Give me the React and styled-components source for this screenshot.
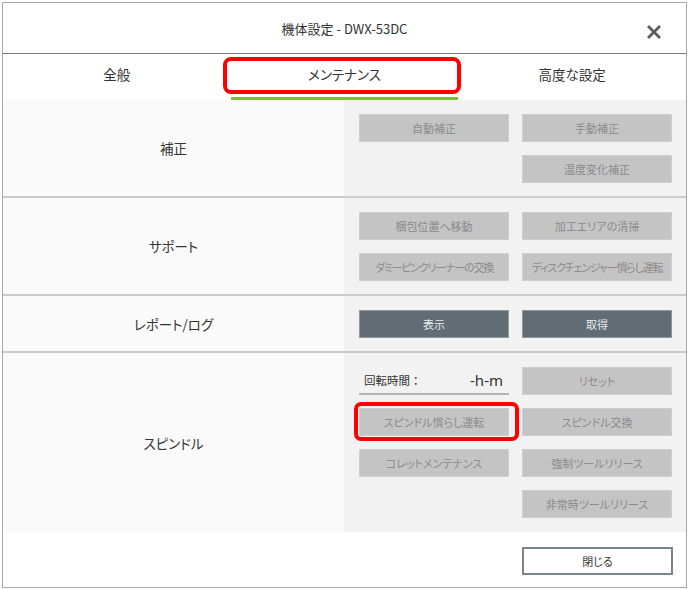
import React from "react";
import styled, { createGlobalStyle } from "styled-components";

const Global = createGlobalStyle`
  html, body { margin: 0; padding: 0; background: #ffffff; }
  body {
    font-family: "Noto Sans CJK JP", "Noto Sans", sans-serif;
    font-feature-settings: "palt" 1;
  }
  * { box-sizing: border-box; }
`;

const Dialog = styled.div`
  margin: 2px 0 0 2px;
  width: 685px;
  height: 586px;
  border: 1px solid #a9a9a9;
  background: #ffffff;
  display: flex;
  flex-direction: column;
`;

const Header = styled.div`
  height: 51px;
  border-bottom: 1px solid #7a7a7a;
  display: flex;
  align-items: center;
  justify-content: center;
  position: relative;
`;

const Title = styled.div`
  font-size: 13px;
  color: #333;
`;

const CloseBtn = styled.div`
  position: absolute;
  right: 24px;
  top: 18px;
  width: 16px;
  height: 16px;
`;

const Tabs = styled.div`
  height: 46px;
  display: grid;
  grid-template-columns: 1fr 1fr 1fr;
`;

const Tab = styled.div`
  position: relative;
  display: flex;
  align-items: center;
  justify-content: center;
  font-size: 13.5px;
  color: #333;
  padding-bottom: 3px;
  border-bottom: 3px solid ${(p) => (p.$active ? "#7dbf3b" : "transparent")};
`;

const Highlight = styled.div`
  position: absolute;
  top: ${(p) => p.$t}px;
  bottom: ${(p) => p.$b}px;
  left: ${(p) => p.$l}px;
  right: ${(p) => p.$r}px;
  border: 4px solid #ff0000;
  border-radius: ${(p) => p.$rad}px;
  pointer-events: none;
`;

const Content = styled.div`
  display: flex;
  flex-direction: column;
`;

const Section = styled.div`
  display: grid;
  grid-template-columns: 341px 1fr;
  border-bottom: ${(p) => (p.$last ? "none" : "2px solid #cbcbcb")};
`;

const Label = styled.div`
  background: #fafafa;
  display: flex;
  align-items: center;
  justify-content: center;
  font-size: 13.5px;
  color: #333;
`;

const Panel = styled.div`
  background: #f2f2f2;
  padding: 14px 14px ${(p) => (p.$last ? 14 : 13)}px 15px;
  display: grid;
  grid-template-columns: 150px 150px;
  grid-auto-rows: 28px;
  gap: 13px;
`;

const Btn = styled.div`
  position: relative;
  grid-column: ${(p) => p.$col || "auto"};
  display: flex;
  align-items: center;
  justify-content: center;
  white-space: nowrap;
  font-size: 11px;
  letter-spacing: ${(p) => (p.$tight ? "-1.2px" : "0")};
  background: ${(p) => (p.$dark ? "#626c74" : "#c4c4c4")};
  color: ${(p) => (p.$dark ? "#e9ecee" : "#8b8b8b")};
  border: 1px solid ${(p) => (p.$dark ? "#8e979e" : "#cfcfcf")};
`;

const Field = styled.div`
  display: flex;
  align-items: center;
  justify-content: space-between;
  padding: 0 6px 0 5px;
  border-bottom: 2px solid #b3b3b3;
`;

const FieldLabel = styled.span`
  font-size: 11.5px;
  color: #333;
  font-feature-settings: normal;
`;

const FieldValue = styled.span`
  font-family: "Noto Sans", "Liberation Sans", sans-serif;
  font-size: 15px;
  color: #333;
`;

const Footer = styled.div`
  flex: 1;
  display: flex;
  justify-content: flex-end;
  align-items: flex-start;
  padding: 15px 13px 0 0;
`;

const CloseButton = styled.div`
  width: 151px;
  height: 28px;
  border: 2px solid #7b858c;
  display: flex;
  align-items: center;
  justify-content: center;
  font-size: 11px;
  color: #333;
  background: #fff;
`;

export default function App() {
  return (
    <>
      <Global />
      <Dialog>
        <Header>
          <Title>機体設定 - DWX-53DC</Title>
          <CloseBtn>
            <svg width="16" height="16" viewBox="0 0 16 16">
              <path d="M2 2 L14 14 M14 2 L2 14" stroke="#555d64" strokeWidth="2.8" strokeLinecap="butt" />
            </svg>
          </CloseBtn>
        </Header>
        <Tabs>
          <Tab>全般</Tab>
          <Tab $active>
            メンテナンス
            <Highlight $t={3} $b={3} $l={-8} $r={-3} $rad={8} />
          </Tab>
          <Tab>高度な設定</Tab>
        </Tabs>
        <Content>
          <Section>
            <Label>補正</Label>
            <Panel>
              <Btn>自動補正</Btn>
              <Btn>手動補正</Btn>
              <Btn $col="2">温度変化補正</Btn>
            </Panel>
          </Section>
          <Section>
            <Label>サポート</Label>
            <Panel>
              <Btn>梱包位置へ移動</Btn>
              <Btn>加工エリアの清掃</Btn>
              <Btn $tight>ダミーピンクリーナーの交換</Btn>
              <Btn $tight>ディスクチェンジャー慣らし運転</Btn>
            </Panel>
          </Section>
          <Section>
            <Label>レポート/ログ</Label>
            <Panel>
              <Btn $dark>表示</Btn>
              <Btn $dark>取得</Btn>
            </Panel>
          </Section>
          <Section $last>
            <Label>スピンドル</Label>
            <Panel $last>
              <Field>
                <FieldLabel>回転時間：</FieldLabel>
                <FieldValue>-h-m</FieldValue>
              </Field>
              <Btn>リセット</Btn>
              <Btn>
                スピンドル慣らし運転
                <Highlight $t={-7} $b={-6} $l={-6} $r={-11} $rad={7} />
              </Btn>
              <Btn>スピンドル交換</Btn>
              <Btn>コレットメンテナンス</Btn>
              <Btn>強制ツールリリース</Btn>
              <Btn $col="2">非常時ツールリリース</Btn>
            </Panel>
          </Section>
        </Content>
        <Footer>
          <CloseButton>閉じる</CloseButton>
        </Footer>
      </Dialog>
    </>
  );
}
